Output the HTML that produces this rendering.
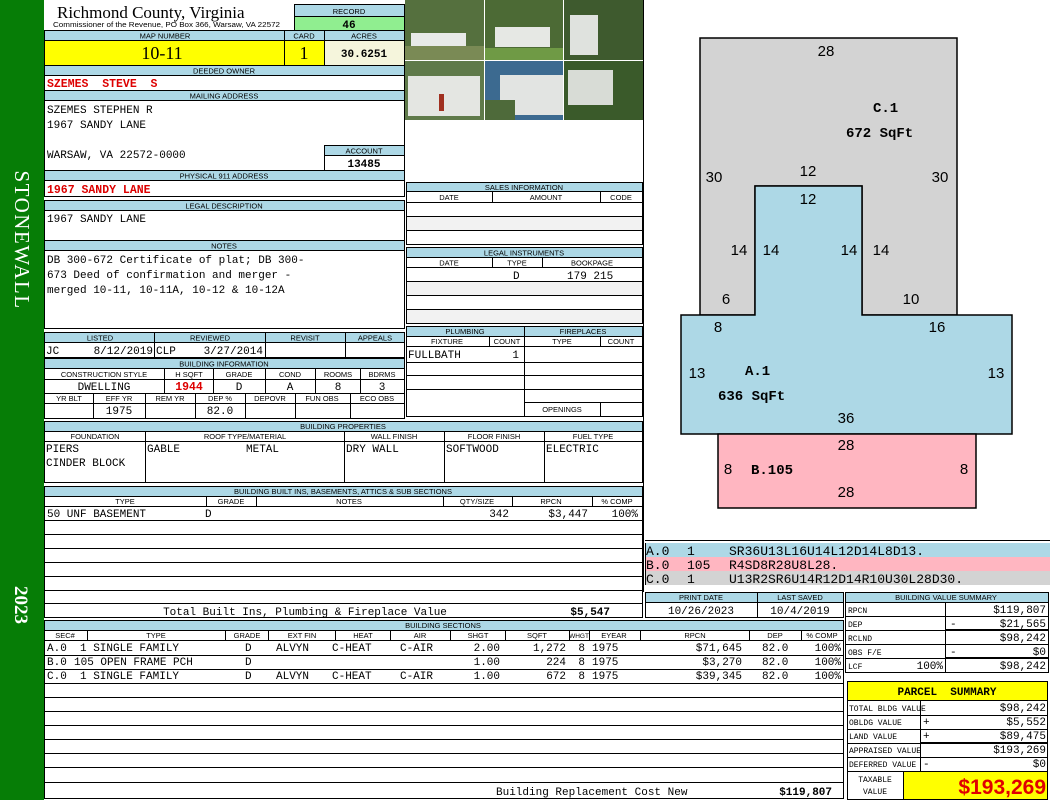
<!DOCTYPE html>
<html><head><meta charset="utf-8"><style>
html,body{margin:0;padding:0;background:#fff;width:1050px;height:800px;overflow:hidden}
svg{display:block}
text{white-space:pre}
.h{font-family:"Liberation Sans",sans-serif;font-size:7.5px;text-anchor:middle;fill:#000}
.m{font-family:"Liberation Mono",monospace;font-size:11px;fill:#000}
.t{font-family:"Liberation Mono",monospace;font-size:8px;fill:#000}
.k{font-family:"Liberation Mono",monospace;font-size:13px;fill:#000}
.r{font-family:"Liberation Mono",monospace;font-size:11.5px;fill:#d00;font-weight:bold}
.d{font-family:"Liberation Sans",sans-serif;font-size:15px;fill:#000}
.s{font-family:"Liberation Mono",monospace;font-size:14px;font-weight:bold;fill:#000}
.e{text-anchor:end}.c{text-anchor:middle}
</style></head><body>
<svg width="1050" height="800" viewBox="0 0 1050 800" xmlns="http://www.w3.org/2000/svg" xml:space="preserve">
<rect x="0" y="0" width="44" height="800" fill="#067d06"/>
<text transform="translate(15,240) rotate(90)" font-family="Liberation Serif,serif" font-size="21" fill="#fff" text-anchor="middle" letter-spacing="1.5">STONEWALL</text>
<text transform="translate(15,605) rotate(90)" font-family="Liberation Serif,serif" font-size="19" fill="#fff" text-anchor="middle" font-weight="bold">2023</text>

<g stroke="#000" stroke-width="1">
<text x="57" y="18" font-family="Liberation Serif,serif" font-size="17" stroke="none">Richmond County, Virginia</text>
<text x="53" y="27" font-family="Liberation Sans,sans-serif" font-size="7" stroke="none" textLength="227" lengthAdjust="spacingAndGlyphs">Commissioner of the Revenue, PO Box 366, Warsaw, VA 22572</text>
<rect x="294.5" y="4.5" width="110" height="12" fill="#add8e6"/>
<rect x="294.5" y="16.5" width="110" height="14" fill="#90ee90"/>
<rect x="44.5" y="30.5" width="360" height="10" fill="#add8e6"/>
<rect x="44.5" y="40.5" width="240" height="25" fill="#ffff00"/>
<rect x="284.5" y="40.5" width="40" height="25" fill="#ffff00"/>
<rect x="324.5" y="40.5" width="80" height="25" fill="#f5f5dc"/>
<line x1="284.5" y1="30.5" x2="284.5" y2="40.5"/><line x1="324.5" y1="30.5" x2="324.5" y2="40.5"/>
<rect x="44.5" y="65.5" width="360" height="10" fill="#add8e6"/>
<rect x="44.5" y="75.5" width="360" height="15" fill="#fff"/>
<rect x="44.5" y="90.5" width="360" height="10" fill="#add8e6"/>
<rect x="44.5" y="100.5" width="360" height="70" fill="#fff"/>
<rect x="324.5" y="145.5" width="80" height="10" fill="#add8e6"/>
<rect x="324.5" y="155.5" width="80" height="15" fill="#fff"/>
<rect x="44.5" y="170.5" width="360" height="10" fill="#add8e6"/>
<rect x="44.5" y="180.5" width="360" height="16" fill="#fff"/>
<rect x="44.5" y="200.5" width="360" height="10" fill="#add8e6"/>
<rect x="44.5" y="210.5" width="360" height="30" fill="#fff"/>
<rect x="44.5" y="240.5" width="360" height="10" fill="#add8e6"/>
<rect x="44.5" y="250.5" width="360" height="78" fill="#fff"/>
<rect x="44.5" y="332.5" width="360" height="10" fill="#add8e6"/>
<rect x="44.5" y="342.5" width="360" height="15" fill="#fff"/>
<line x1="154.5" y1="332.5" x2="154.5" y2="357.5"/><line x1="265.5" y1="332.5" x2="265.5" y2="357.5"/><line x1="345.5" y1="332.5" x2="345.5" y2="357.5"/>
<rect x="44.5" y="358.5" width="360" height="10" fill="#add8e6"/>
<rect x="44.5" y="368.5" width="360" height="50" fill="#fff"/>
<line x1="44.5" y1="379.5" x2="404.5" y2="379.5"/><line x1="44.5" y1="393.5" x2="404.5" y2="393.5"/><line x1="44.5" y1="403.5" x2="404.5" y2="403.5"/>
<line x1="164.5" y1="368.5" x2="164.5" y2="393.5"/><line x1="213.5" y1="368.5" x2="213.5" y2="393.5"/><line x1="265.5" y1="368.5" x2="265.5" y2="393.5"/><line x1="315.5" y1="368.5" x2="315.5" y2="393.5"/><line x1="360.5" y1="368.5" x2="360.5" y2="393.5"/>
<line x1="93.5" y1="393.5" x2="93.5" y2="418.5"/><line x1="145.5" y1="393.5" x2="145.5" y2="418.5"/><line x1="195.5" y1="393.5" x2="195.5" y2="418.5"/><line x1="245.5" y1="393.5" x2="245.5" y2="418.5"/><line x1="295.5" y1="393.5" x2="295.5" y2="418.5"/><line x1="350.5" y1="393.5" x2="350.5" y2="418.5"/>

<rect x="405" y="0" width="79" height="60" fill="#55703e" stroke="none"/>
<rect x="411" y="33" width="55" height="13" fill="#e8eae8" stroke="none"/>
<rect x="405" y="46" width="79" height="14" fill="#7a8a55" stroke="none"/>
<rect x="485" y="0" width="78" height="60" fill="#4c6a35" stroke="none"/>
<rect x="495" y="27" width="55" height="20" fill="#e6e8e4" stroke="none"/>
<rect x="485" y="48" width="78" height="12" fill="#6f9a45" stroke="none"/>
<rect x="564" y="0" width="79" height="60" fill="#3e5a2e" stroke="none"/>
<rect x="570" y="15" width="28" height="40" fill="#dfe2de" stroke="none"/>
<rect x="405" y="61" width="79" height="59" fill="#5f7a4a" stroke="none"/>
<rect x="408" y="76" width="72" height="40" fill="#e4e6e2" stroke="none"/>
<rect x="439" y="94" width="5" height="17" fill="#a03020" stroke="none"/>
<rect x="485" y="61" width="78" height="59" fill="#3c6a90" stroke="none"/>
<rect x="500" y="75" width="63" height="40" fill="#e2e4e2" stroke="none"/>
<rect x="485" y="100" width="30" height="20" fill="#4e6a3a" stroke="none"/>
<rect x="564" y="61" width="79" height="59" fill="#3a5a2a" stroke="none"/>
<rect x="568" y="70" width="45" height="35" fill="#d8dcd6" stroke="none"/>
<line x1="643.5" y1="0" x2="643.5" y2="592"/>

<rect x="406.5" y="182.5" width="236" height="9" fill="#add8e6"/>
<rect x="406.5" y="191.5" width="236" height="53" fill="#fff"/>
<rect x="407" y="216" width="235" height="14" fill="#f2f2f2" stroke="none"/>
<line x1="406.5" y1="202.5" x2="642.5" y2="202.5"/><line x1="406.5" y1="216.5" x2="642.5" y2="216.5"/><line x1="406.5" y1="230.5" x2="642.5" y2="230.5"/>
<line x1="492.5" y1="191.5" x2="492.5" y2="202.5"/><line x1="600.5" y1="191.5" x2="600.5" y2="202.5"/>
<rect x="406.5" y="247.5" width="236" height="10" fill="#add8e6"/>
<rect x="406.5" y="257.5" width="236" height="66" fill="#fff"/>
<rect x="407" y="282" width="235" height="13" fill="#f2f2f2" stroke="none"/>
<rect x="407" y="310" width="235" height="13" fill="#f2f2f2" stroke="none"/>
<line x1="406.5" y1="267.5" x2="642.5" y2="267.5"/><line x1="406.5" y1="281.5" x2="642.5" y2="281.5"/><line x1="406.5" y1="295.5" x2="642.5" y2="295.5"/><line x1="406.5" y1="309.5" x2="642.5" y2="309.5"/>
<line x1="492.5" y1="257.5" x2="492.5" y2="267.5"/><line x1="542.5" y1="257.5" x2="542.5" y2="267.5"/>
<rect x="406.5" y="326.5" width="236" height="10" fill="#add8e6"/>
<rect x="406.5" y="336.5" width="236" height="80" fill="#fff"/>
<line x1="524.5" y1="326.5" x2="524.5" y2="416.5"/>
<line x1="406.5" y1="346.5" x2="642.5" y2="346.5"/>
<line x1="406.5" y1="362.5" x2="642.5" y2="362.5"/><line x1="406.5" y1="375.5" x2="642.5" y2="375.5"/><line x1="406.5" y1="389.5" x2="642.5" y2="389.5"/><line x1="524.5" y1="402.5" x2="642.5" y2="402.5"/>
<line x1="489.5" y1="336.5" x2="489.5" y2="346.5"/><line x1="600.5" y1="336.5" x2="600.5" y2="346.5"/><line x1="600.5" y1="402.5" x2="600.5" y2="416.5"/>

<rect x="44.5" y="421.5" width="598" height="10" fill="#add8e6"/>
<rect x="44.5" y="431.5" width="598" height="51" fill="#fff"/>
<line x1="44.5" y1="441.5" x2="642.5" y2="441.5"/>
<line x1="145.5" y1="431.5" x2="145.5" y2="482.5"/><line x1="344.5" y1="431.5" x2="344.5" y2="482.5"/><line x1="444.5" y1="431.5" x2="444.5" y2="482.5"/><line x1="544.5" y1="431.5" x2="544.5" y2="482.5"/>
<rect x="44.5" y="486.5" width="598" height="10" fill="#add8e6"/>
<rect x="44.5" y="496.5" width="598" height="121" fill="#fff"/>
<line x1="44.5" y1="506.5" x2="642.5" y2="506.5"/>
<line x1="44.5" y1="520.5" x2="642.5" y2="520.5"/><line x1="44.5" y1="534.5" x2="642.5" y2="534.5"/><line x1="44.5" y1="548.5" x2="642.5" y2="548.5"/><line x1="44.5" y1="562.5" x2="642.5" y2="562.5"/><line x1="44.5" y1="576.5" x2="642.5" y2="576.5"/><line x1="44.5" y1="590.5" x2="642.5" y2="590.5"/><line x1="44.5" y1="603.5" x2="642.5" y2="603.5"/>
<line x1="206.5" y1="496.5" x2="206.5" y2="506.5"/><line x1="256.5" y1="496.5" x2="256.5" y2="506.5"/><line x1="443.5" y1="496.5" x2="443.5" y2="506.5"/><line x1="512.5" y1="496.5" x2="512.5" y2="506.5"/><line x1="592.5" y1="496.5" x2="592.5" y2="506.5"/>

<rect x="645.5" y="592.5" width="198" height="10" fill="#add8e6"/>
<rect x="645.5" y="602.5" width="198" height="15" fill="#fff"/>
<line x1="757.5" y1="592.5" x2="757.5" y2="617.5"/>

<rect x="44.5" y="620.5" width="799" height="10" fill="#add8e6"/>
<rect x="44.5" y="630.5" width="799" height="168" fill="#fff"/>
<line x1="44.5" y1="640.5" x2="843.5" y2="640.5"/>
<line x1="44.5" y1="655.5" x2="843.5" y2="655.5"/><line x1="44.5" y1="669.5" x2="843.5" y2="669.5"/><line x1="44.5" y1="683.5" x2="843.5" y2="683.5"/><line x1="44.5" y1="697.5" x2="843.5" y2="697.5"/><line x1="44.5" y1="711.5" x2="843.5" y2="711.5"/><line x1="44.5" y1="725.5" x2="843.5" y2="725.5"/><line x1="44.5" y1="739.5" x2="843.5" y2="739.5"/><line x1="44.5" y1="753.5" x2="843.5" y2="753.5"/><line x1="44.5" y1="767.5" x2="843.5" y2="767.5"/><line x1="44.5" y1="782.5" x2="843.5" y2="782.5"/>
<line x1="87.5" y1="630.5" x2="87.5" y2="640.5"/><line x1="225.5" y1="630.5" x2="225.5" y2="640.5"/><line x1="268.5" y1="630.5" x2="268.5" y2="640.5"/><line x1="335.5" y1="630.5" x2="335.5" y2="640.5"/><line x1="390.5" y1="630.5" x2="390.5" y2="640.5"/><line x1="450.5" y1="630.5" x2="450.5" y2="640.5"/><line x1="505.5" y1="630.5" x2="505.5" y2="640.5"/><line x1="569.5" y1="630.5" x2="569.5" y2="640.5"/><line x1="589.5" y1="630.5" x2="589.5" y2="640.5"/><line x1="640.5" y1="630.5" x2="640.5" y2="640.5"/><line x1="749.5" y1="630.5" x2="749.5" y2="640.5"/><line x1="801.5" y1="630.5" x2="801.5" y2="640.5"/>

<polygon points="700,38 957,38 957,315 862,315 862,186 755,186 755,315 700,315" fill="#d3d3d3" stroke-width="1.5"/>
<polygon points="681,315 755,315 755,186 862,186 862,315 1012,315 1012,434 681,434" fill="#add8e6" stroke-width="1.5"/>
<rect x="718" y="434" width="258" height="74" fill="#ffb6c1" stroke-width="1.5"/>
<line x1="645" y1="540.5" x2="1050" y2="540.5"/>
<rect x="645" y="543" width="405" height="14" fill="#add8e6" stroke="none"/>
<rect x="645" y="557" width="405" height="14" fill="#ffb6c1" stroke="none"/>
<rect x="645" y="571" width="405" height="14" fill="#d3d3d3" stroke="none"/>
<line x1="645.5" y1="543" x2="645.5" y2="585"/>

<rect x="845.5" y="592.5" width="203" height="10" fill="#add8e6"/>
<rect x="845.5" y="602.5" width="203" height="70" fill="#fff"/>
<line x1="845.5" y1="616.5" x2="1048" y2="616.5"/><line x1="845.5" y1="630.5" x2="1048" y2="630.5"/><line x1="845.5" y1="644.5" x2="1048" y2="644.5"/><line x1="845.5" y1="658.5" x2="1048" y2="658.5"/>
<line x1="945.5" y1="602.5" x2="945.5" y2="672.5"/>
<line x1="945" y1="630" x2="1048" y2="630" stroke-width="2"/><line x1="945" y1="658" x2="1048" y2="658" stroke-width="2"/>
<rect x="847.5" y="681.5" width="200" height="19" fill="#ffff00"/>
<rect x="847.5" y="700.5" width="200" height="99" fill="#fff"/>
<line x1="847.5" y1="715.5" x2="1048" y2="715.5"/><line x1="847.5" y1="729.5" x2="1048" y2="729.5"/><line x1="847.5" y1="743.5" x2="1048" y2="743.5"/><line x1="847.5" y1="757.5" x2="1048" y2="757.5"/><line x1="847.5" y1="771.5" x2="1048" y2="771.5"/>
<line x1="920" y1="743" x2="1048" y2="743" stroke-width="2"/>
<line x1="920.5" y1="700.5" x2="920.5" y2="771.5"/>
<rect x="903.5" y="771.5" width="144" height="28" fill="#ffff00"/>
</g>

<text class="h" x="349" y="14">RECORD</text>
<text class="m c" x="349" y="28" font-weight="bold">46</text>
<text class="h" x="165" y="38.5">MAP NUMBER</text>
<text class="h" x="304" y="38.5">CARD</text>
<text class="h" x="364" y="38.5">ACRES</text>
<text x="162" y="59" font-family="Liberation Serif,serif" font-size="18" text-anchor="middle">10-11</text>
<text x="304" y="59" font-family="Liberation Serif,serif" font-size="18" text-anchor="middle">1</text>
<text class="m c" x="364" y="57" font-weight="bold" font-size="12">30.6251</text>
<text class="h" x="224" y="73.5">DEEDED OWNER</text>
<text class="r" x="47" y="87">SZEMES  STEVE  S</text>
<text class="h" x="224" y="98.5">MAILING ADDRESS</text>
<text class="m" x="47" y="113">SZEMES STEPHEN R</text>
<text class="m" x="47" y="128">1967 SANDY LANE</text>
<text class="m" x="47" y="158">WARSAW, VA 22572-0000</text>
<text class="h" x="364" y="153.5">ACCOUNT</text>
<text class="m c" x="364" y="167" font-weight="bold">13485</text>
<text class="h" x="224" y="178.5">PHYSICAL 911 ADDRESS</text>
<text class="r" x="47" y="193">1967 SANDY LANE</text>
<text class="h" x="224" y="208.5">LEGAL DESCRIPTION</text>
<text class="m" x="47" y="222">1967 SANDY LANE</text>
<text class="h" x="224" y="248.5">NOTES</text>
<text class="m" x="47" y="263">DB 300-672 Certificate of plat; DB 300-</text>
<text class="m" x="47" y="278">673 Deed of confirmation and merger -</text>
<text class="m" x="47" y="293">merged 10-11, 10-11A, 10-12 &amp; 10-12A</text>

<text class="h" x="100" y="340.5">LISTED</text><text class="h" x="210" y="340.5">REVIEWED</text><text class="h" x="305" y="340.5">REVISIT</text><text class="h" x="375" y="340.5">APPEALS</text>
<text class="m" x="46" y="354">JC</text><text class="m e" x="153" y="354">8/12/2019</text><text class="m" x="156" y="354">CLP</text><text class="m e" x="263" y="354">3/27/2014</text>
<text class="h" x="224" y="366.5">BUILDING INFORMATION</text>
<text class="h" x="104" y="377">CONSTRUCTION STYLE</text><text class="h" x="189" y="377">H SQFT</text><text class="h" x="239" y="377">GRADE</text><text class="h" x="290" y="377">COND</text><text class="h" x="338" y="377">ROOMS</text><text class="h" x="382" y="377">BDRMS</text>
<text class="m c" x="104" y="390">DWELLING</text><text class="r c" x="189" y="390">1944</text><text class="m c" x="239" y="390">D</text><text class="m c" x="290" y="390">A</text><text class="m c" x="338" y="390">8</text><text class="m c" x="382" y="390">3</text>
<text class="h" x="69" y="401">YR BLT</text><text class="h" x="119" y="401">EFF YR</text><text class="h" x="170" y="401">REM YR</text><text class="h" x="220" y="401">DEP %</text><text class="h" x="270" y="401">DEPOVR</text><text class="h" x="322" y="401">FUN OBS</text><text class="h" x="377" y="401">ECO OBS</text>
<text class="m c" x="119" y="414">1975</text><text class="m c" x="220" y="414">82.0</text>

<text class="h" x="524" y="190">SALES INFORMATION</text>
<text class="h" x="449" y="200">DATE</text><text class="h" x="546" y="200">AMOUNT</text><text class="h" x="621" y="200">CODE</text>
<text class="h" x="524" y="255.5">LEGAL INSTRUMENTS</text>
<text class="h" x="449" y="265.5">DATE</text><text class="h" x="517" y="265.5">TYPE</text><text class="h" x="592" y="265.5">BOOKPAGE</text>
<text class="m" x="513" y="279">D</text><text class="m" x="567" y="279">179 215</text>
<text class="h" x="465" y="334">PLUMBING</text><text class="h" x="583" y="334">FIREPLACES</text>
<text class="h" x="447" y="344">FIXTURE</text><text class="h" x="507" y="344">COUNT</text><text class="h" x="562" y="344">TYPE</text><text class="h" x="621" y="344">COUNT</text>
<text class="m" x="408" y="358">FULLBATH</text><text class="m e" x="519" y="358">1</text>
<text class="h" x="562" y="412">OPENINGS</text>

<text class="h" x="343" y="429">BUILDING PROPERTIES</text>
<text class="h" x="95" y="439">FOUNDATION</text><text class="h" x="245" y="439">ROOF TYPE/MATERIAL</text><text class="h" x="394" y="439">WALL FINISH</text><text class="h" x="494" y="439">FLOOR FINISH</text><text class="h" x="593" y="439">FUEL TYPE</text>
<text class="m" x="46" y="452">PIERS</text><text class="m" x="46" y="466">CINDER BLOCK</text>
<text class="m" x="147" y="452">GABLE</text><text class="m" x="246" y="452">METAL</text>
<text class="m" x="346" y="452">DRY WALL</text><text class="m" x="446" y="452">SOFTWOOD</text><text class="m" x="546" y="452">ELECTRIC</text>

<text class="h" x="343" y="494">BUILDING BUILT INS, BASEMENTS, ATTICS &amp; SUB SECTIONS</text>
<text class="h" x="125" y="504">TYPE</text><text class="h" x="231" y="504">GRADE</text><text class="h" x="349" y="504">NOTES</text><text class="h" x="477" y="504">QTY/SIZE</text><text class="h" x="551" y="504">RPCN</text><text class="h" x="617" y="504">% COMP</text>
<text class="m" x="47" y="517">50 UNF BASEMENT</text><text class="m" x="205" y="517">D</text><text class="m e" x="509" y="517">342</text><text class="m e" x="588" y="517">$3,447</text><text class="m e" x="638" y="517">100%</text>
<text class="m c" x="305" y="615">Total Built Ins, Plumbing &amp; Fireplace Value</text>
<text class="m e" x="610" y="615" font-weight="bold">$5,547</text>

<text class="h" x="701" y="600">PRINT DATE</text><text class="h" x="800" y="600">LAST SAVED</text>
<text class="m c" x="701" y="614">10/26/2023</text><text class="m c" x="800" y="614">10/4/2019</text>

<text class="h" x="443" y="628">BUILDING SECTIONS</text>
<text class="h" x="65" y="638">SEC#</text><text class="h" x="156" y="638">TYPE</text><text class="h" x="247" y="638">GRADE</text><text class="h" x="302" y="638">EXT FIN</text><text class="h" x="363" y="638">HEAT</text><text class="h" x="420" y="638">AIR</text><text class="h" x="478" y="638">SHGT</text><text class="h" x="537" y="638">SQFT</text><text class="h" x="579" y="638" style="font-size:6.5px">WHGT</text><text class="h" x="614" y="638">EYEAR</text><text class="h" x="695" y="638">RPCN</text><text class="h" x="775" y="638">DEP</text><text class="h" x="822" y="638">% COMP</text>
<g class="m">
<text x="47" y="651">A.0</text><text x="80" y="651">1 SINGLE FAMILY</text><text x="245" y="651">D</text><text x="276" y="651">ALVYN</text><text x="332" y="651">C-HEAT</text><text x="400" y="651">C-AIR</text><text class="e" x="500" y="651">2.00</text><text class="e" x="566" y="651">1,272</text><text class="e" x="585" y="651">8</text><text x="592" y="651">1975</text><text class="e" x="742" y="651">$71,645</text><text x="762" y="651">82.0</text><text class="e" x="841" y="651">100%</text>
<text x="47" y="665">B.0</text><text x="74" y="665">105 OPEN FRAME PCH</text><text x="245" y="665">D</text><text class="e" x="500" y="665">1.00</text><text class="e" x="566" y="665">224</text><text class="e" x="585" y="665">8</text><text x="592" y="665">1975</text><text class="e" x="742" y="665">$3,270</text><text x="762" y="665">82.0</text><text class="e" x="841" y="665">100%</text>
<text x="47" y="679">C.0</text><text x="80" y="679">1 SINGLE FAMILY</text><text x="245" y="679">D</text><text x="276" y="679">ALVYN</text><text x="332" y="679">C-HEAT</text><text x="400" y="679">C-AIR</text><text class="e" x="500" y="679">1.00</text><text class="e" x="566" y="679">672</text><text class="e" x="585" y="679">8</text><text x="592" y="679">1975</text><text class="e" x="742" y="679">$39,345</text><text x="762" y="679">82.0</text><text class="e" x="841" y="679">100%</text>
</g>
<text class="m" x="496" y="795">Building Replacement Cost New</text>
<text class="m e" x="832" y="795" font-weight="bold">$119,807</text>

<g class="d">
<text x="826" y="56" class="c">28</text>
<text x="714" y="182" class="c">30</text><text x="940" y="182" class="c">30</text>
<text x="808" y="176" class="c">12</text><text x="808" y="204" class="c">12</text>
<text x="739" y="255" class="c">14</text><text x="771" y="255" class="c">14</text><text x="849" y="255" class="c">14</text><text x="881" y="255" class="c">14</text>
<text x="726" y="304" class="c">6</text><text x="911" y="304" class="c">10</text>
<text x="718" y="332" class="c">8</text><text x="937" y="332" class="c">16</text>
<text x="697" y="378" class="c">13</text><text x="996" y="378" class="c">13</text>
<text x="846" y="423" class="c">36</text><text x="846" y="450" class="c">28</text><text x="846" y="497" class="c">28</text>
<text x="728" y="474" class="c">8</text><text x="964" y="474" class="c">8</text>
</g>
<text class="s" x="873" y="112">C.1</text><text class="s" x="846" y="137">672 SqFt</text>
<text class="s" x="745" y="375">A.1</text><text class="s" x="718" y="400">636 SqFt</text>
<text class="s" x="751" y="474">B.105</text>

<text class="k" x="646" y="555">A.0</text><text class="k" x="687" y="555">1</text><text class="k" x="729" y="555">SR36U13L16U14L12D14L8D13.</text>
<text class="k" x="646" y="569" fill="#7a1010">B.0</text><text class="k" x="687" y="569" fill="#7a1010">105</text><text class="k" x="729" y="569" fill="#7a1010">R4SD8R28U8L28.</text>
<text class="k" x="646" y="583">C.0</text><text class="k" x="687" y="583">1</text><text class="k" x="729" y="583">U13R2SR6U14R12D14R10U30L28D30.</text>

<text class="h" x="946" y="600">BUILDING VALUE SUMMARY</text>
<text class="t" x="848" y="613">RPCN</text><text class="t" x="848" y="627">DEP</text><text class="t" x="848" y="641">RCLND</text><text class="t" x="848" y="655">OBS F/E</text><text class="t" x="848" y="669">LCF</text>
<g class="m">
<text class="e" x="943" y="669">100%</text>
<text x="950" y="627">-</text><text x="950" y="655">-</text>
<text class="e" x="1046" y="613">$119,807</text><text class="e" x="1046" y="627">$21,565</text><text class="e" x="1046" y="641">$98,242</text><text class="e" x="1046" y="655">$0</text><text class="e" x="1046" y="669">$98,242</text>
</g>
<text class="m c" x="947" y="695" font-weight="bold">PARCEL  SUMMARY</text>
<text class="t" x="849" y="711">TOTAL BLDG VALUE</text><text class="t" x="849" y="725">OBLDG VALUE</text><text class="t" x="849" y="739">LAND VALUE</text><text class="t" x="849" y="753">APPRAISED VALUE</text><text class="t" x="849" y="767">DEFERRED VALUE</text>
<text class="t c" x="875" y="782">TAXABLE</text><text class="t c" x="875" y="794">VALUE</text>
<g class="m">
<text x="923" y="725">+</text><text x="923" y="739">+</text><text x="923" y="767">-</text>
<text class="e" x="1046" y="711">$98,242</text><text class="e" x="1046" y="725">$5,552</text><text class="e" x="1046" y="739">$89,475</text><text class="e" x="1046" y="753">$193,269</text><text class="e" x="1046" y="767">$0</text>
</g>
<text x="1046" y="794" text-anchor="end" font-family="Liberation Sans,sans-serif" font-size="21" font-weight="bold" fill="#e00000">$193,269</text>
</svg>
</body></html>
